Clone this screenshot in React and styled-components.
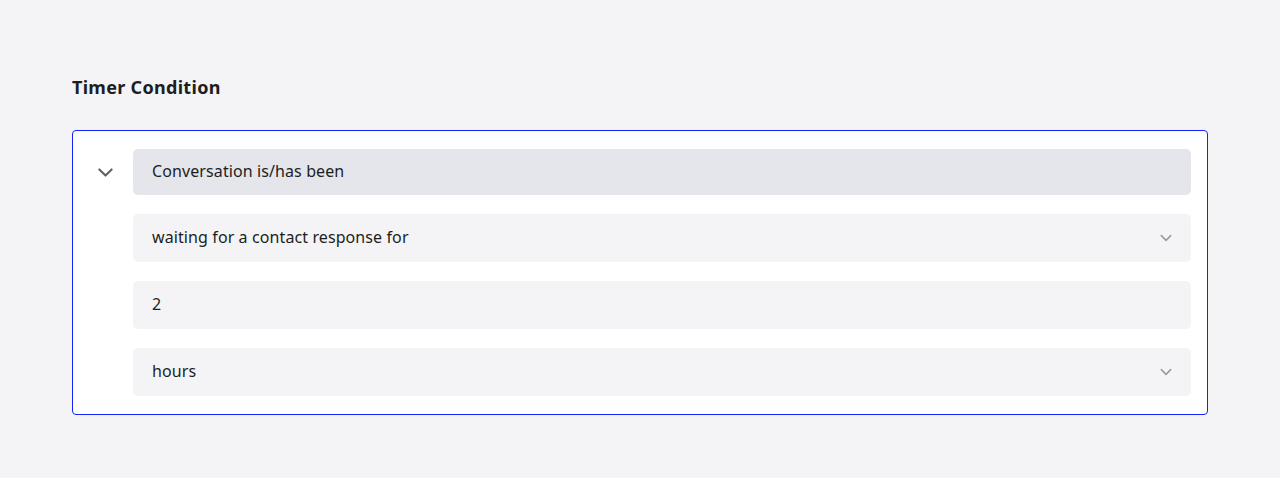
import styled, { createGlobalStyle } from "styled-components";

const Global = createGlobalStyle`
  html, body {
    margin: 0;
    background: #f4f4f6;
    font-family: "Noto Sans", "Open Sans", sans-serif;
    color: #1c1e21;
  }
`;

const Page = styled.div`
  padding: 74px 72px 0 72px;
`;

const Title = styled.h2`
  margin: 0 0 30px 0;
  font-size: 18px;
  font-weight: 700;
  line-height: 26px;
  letter-spacing: 0.3px;
  color: #1c1e21;
`;

const Card = styled.div`
  display: flex;
  background: #fff;
  border: 1px solid #1424f8;
  border-radius: 4px;
  padding: 18px 16px 18px 0;
`;

const Toggle = styled.div`
  width: 60px;
  flex: none;
  display: flex;
  justify-content: center;
  padding-top: 13px;
  padding-left: 4px;
  box-sizing: border-box;
  color: #5f6368;
`;

const Fields = styled.div`
  flex: 1;
  display: flex;
  flex-direction: column;
  gap: 19px;
`;

const Field = styled.div`
  display: flex;
  align-items: center;
  justify-content: space-between;
  height: ${(p) => (p.$head ? 46 : 48)}px;
  padding: 0 19px 2px 19px;
  box-sizing: border-box;
  border-radius: 5px;
  background: ${(p) => (p.$head ? "#e4e6eb" : "#f4f4f6")};
  font-size: 16px;
  letter-spacing: 0.1px;
  color: #1c1e21;
`;

const Caret = styled.span`
  display: flex;
  color: #9a9ca1;
  margin-right: -2px;
  margin-top: 2px;
`;

function Chevron({ size, stroke }) {
  return (
    <svg width={size} height={size} viewBox="0 0 24 24" fill="none">
      <path
        d="M5 8.5l7 7 7-7"
        stroke="currentColor"
        strokeWidth={stroke}
        strokeLinecap="round"
        strokeLinejoin="round"
      />
    </svg>
  );
}

export default function App() {
  return (
    <>
      <Global />
      <Page>
        <Title>Timer Condition</Title>
        <Card>
          <Toggle>
            <Chevron size={21} stroke={2.4} />
          </Toggle>
          <Fields>
            <Field $head>Conversation is/has been</Field>
            <Field>
              waiting for a contact response for
              <Caret>
                <Chevron size={16} stroke={2.4} />
              </Caret>
            </Field>
            <Field>2</Field>
            <Field>
              hours
              <Caret>
                <Chevron size={16} stroke={2.4} />
              </Caret>
            </Field>
          </Fields>
        </Card>
      </Page>
    </>
  );
}
